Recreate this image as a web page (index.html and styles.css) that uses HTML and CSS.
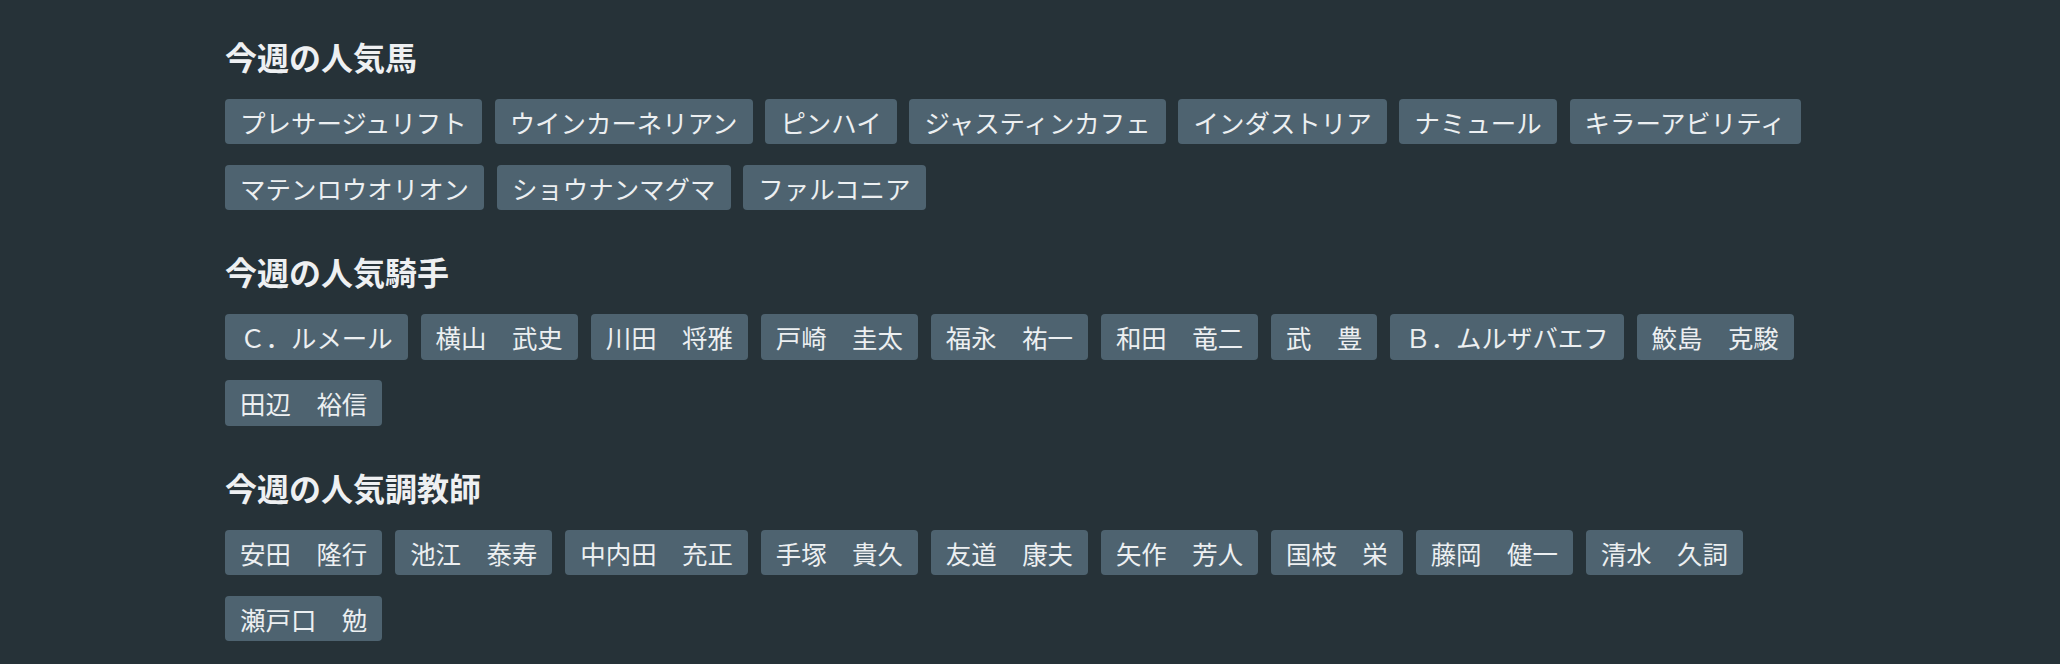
FILE: index.html
```html
<!DOCTYPE html>
<html lang="ja">
<head>
<meta charset="utf-8">
<title>今週の人気</title>
<link rel="stylesheet" href="styles.css">
</head>
<body>
<main class="container">
  <section class="group">
    <h2 class="group-title">今週の人気馬</h2>
    <ul class="chips">
      <li class="chip">プレサージュリフト</li>
      <li class="chip">ウインカーネリアン</li>
      <li class="chip">ピンハイ</li>
      <li class="chip">ジャスティンカフェ</li>
      <li class="chip">インダストリア</li>
      <li class="chip">ナミュール</li>
      <li class="chip">キラーアビリティ</li>
      <li class="chip">マテンロウオリオン</li>
      <li class="chip">ショウナンマグマ</li>
      <li class="chip">ファルコニア</li>
    </ul>
  </section>
  <section class="group">
    <h2 class="group-title">今週の人気騎手</h2>
    <ul class="chips">
      <li class="chip">Ｃ．ルメール</li>
      <li class="chip">横山　武史</li>
      <li class="chip">川田　将雅</li>
      <li class="chip">戸崎　圭太</li>
      <li class="chip">福永　祐一</li>
      <li class="chip">和田　竜二</li>
      <li class="chip">武　豊</li>
      <li class="chip">Ｂ．ムルザバエフ</li>
      <li class="chip">鮫島　克駿</li>
      <li class="chip">田辺　裕信</li>
    </ul>
  </section>
  <section class="group">
    <h2 class="group-title">今週の人気調教師</h2>
    <ul class="chips">
      <li class="chip">安田　隆行</li>
      <li class="chip">池江　泰寿</li>
      <li class="chip">中内田　充正</li>
      <li class="chip">手塚　貴久</li>
      <li class="chip">友道　康夫</li>
      <li class="chip">矢作　芳人</li>
      <li class="chip">国枝　栄</li>
      <li class="chip">藤岡　健一</li>
      <li class="chip">清水　久詞</li>
      <li class="chip">瀬戸口　勉</li>
    </ul>
  </section>
</main>
</body>
</html>
```
FILE: styles.css
```css
html, body {
  margin: 0;
  padding: 0;
}
body {
  background: #263238;
  color: #eceff1;
  font-family: "Noto Sans CJK JP", "Noto Sans", sans-serif;
}
.container {
  width: 1610px;
  margin: 0 auto;
  padding-top: 36px;
  display: flex;
  flex-direction: column;
  gap: 41px;
}
.group-title {
  margin: 0 0 23px 0;
  font-size: 32px;
  line-height: 40px;
  font-weight: 700;
  color: #eef0f2;
}
.chips {
  list-style: none;
  margin: 0;
  padding: 0;
  display: flex;
  flex-wrap: wrap;
  gap: 20.5px 12.7px;
}
.chip {
  background: #4e6370;
  color: #eceff1;
  font-size: 25.45px;
  line-height: 33.4px;
  padding: 6px 15.1px;
  border-radius: 4px;
  white-space: nowrap;
}
```
